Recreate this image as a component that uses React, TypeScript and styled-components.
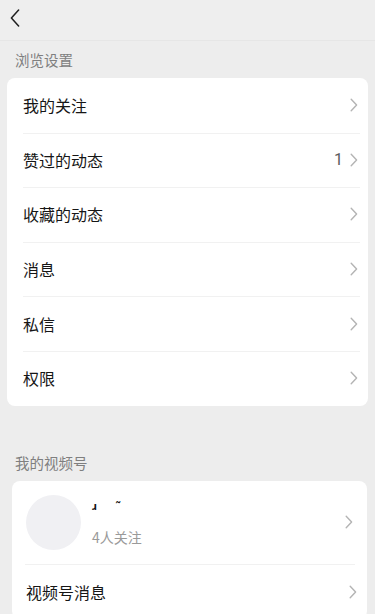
import React from "react"
import styled, { createGlobalStyle } from "styled-components"

const GlobalStyle = createGlobalStyle`
  html, body {
    margin: 0;
    padding: 0;
    background: #ededed;
    font-family: "Noto Sans CJK SC", "Noto Sans", sans-serif;
  }
`

const Page = styled.div`
  width: 375px;
  min-height: 614px;
  background: #ededed;
  overflow: hidden;
`

const TopBar = styled.header`
  height: 40px;
  display: flex;
  align-items: center;
  padding-left: 8px;
  border-bottom: 1px solid #e6e6e6;
  background: #eeeeee;
`

const BackButton = styled.button`
  width: 14px;
  height: 22px;
  padding: 0;
  border: 0;
  background: none;
  display: flex;
  align-items: center;
  justify-content: center;
  margin-top: -4px;
`

const SectionLabel = styled.div<{ $top: number }>`
  padding: ${(p) => p.$top}px 0 0 15px;
  height: 20px;
  line-height: 20px;
  font-size: 14.5px;
  color: #7f7f7f;
  margin-bottom: 8px;
`

const Card = styled.section<{ $left: number; $right: number }>`
  margin: 0 ${(p) => p.$right}px 0 ${(p) => p.$left}px;
  background: #ffffff;
  border-radius: 8px;
  overflow: hidden;
`

const Row = styled.div<{ $inset: number }>`
  height: 54.6px;
  display: flex;
  align-items: center;
  padding: 0 10px 0 ${(p) => p.$inset}px;
  position: relative;

  & + &::before {
    content: "";
    position: absolute;
    top: 0;
    left: ${(p) => p.$inset}px;
    right: 8px;
    height: 1px;
    background: #f1f1f1;
  }
`

const RowTitle = styled.span`
  flex: 1;
  font-size: 16px;
  color: #161616;
`

const RowValue = styled.span`
  font-size: 16px;
  color: #5c5c5c;
  margin-right: 7px;
  font-family: "Roboto", "Noto Sans", sans-serif;
`

const ProfileRow = styled.div`
  height: 83px;
  display: flex;
  align-items: center;
  padding: 0 14px 0 14px;
`

const Avatar = styled.div`
  width: 55px;
  height: 55px;
  border-radius: 50%;
  background: #f0f0f3;
  flex-shrink: 0;
`

const ProfileText = styled.div`
  flex: 1;
  margin-left: 11px;
  display: flex;
  flex-direction: column;
  gap: 15px;
`

const ProfileName = styled.span`
  font-size: 11px;
  line-height: 14px;
  font-weight: 700;
  color: #111111;
  letter-spacing: 8px;
`

const ProfileMeta = styled.span`
  font-size: 14px;
  line-height: 20px;
  color: #9a9a9a;
`

const Divider = styled.div`
  height: 1px;
  margin: 0 12px 0 13px;
  background: #f1f1f1;
`

function Chevron() {
  return (
    <svg width="8" height="14" viewBox="0 0 8 14" fill="none">
      <path d="M1.2 1.2 L6.6 7 L1.2 12.8" stroke="#b4b4b4" strokeWidth="1.4" strokeLinecap="round" strokeLinejoin="round" />
    </svg>
  )
}

const browseItems: { title: string; value?: string }[] = [
  { title: "我的关注" },
  { title: "赞过的动态", value: "1" },
  { title: "收藏的动态" },
  { title: "消息" },
  { title: "私信" },
  { title: "权限" },
]

export default function App() {
  return (
    <Page>
      <GlobalStyle />
      <TopBar>
        <BackButton aria-label="返回">
          <svg width="10" height="18" viewBox="0 0 10 18" fill="none">
            <path d="M8.6 1 L1.4 9 L8.6 17" stroke="#1f1f1f" strokeWidth="1.5" strokeLinecap="round" strokeLinejoin="round" />
          </svg>
        </BackButton>
      </TopBar>

      <SectionLabel $top={9}>浏览设置</SectionLabel>
      <Card $left={7} $right={7}>
        {browseItems.map((item) => (
          <Row key={item.title} $inset={16}>
            <RowTitle>{item.title}</RowTitle>
            {item.value && <RowValue>{item.value}</RowValue>}
            <Chevron />
          </Row>
        ))}
      </Card>

      <SectionLabel $top={47}>我的视频号</SectionLabel>
      <Card $left={12} $right={8}>
        <ProfileRow>
          <Avatar />
          <ProfileText>
            <ProfileName>ɹ ˜</ProfileName>
            <ProfileMeta>4人关注</ProfileMeta>
          </ProfileText>
          <Chevron />
        </ProfileRow>
        <Divider />
        <Row $inset={14}>
          <RowTitle>视频号消息</RowTitle>
          <Chevron />
        </Row>
      </Card>
    </Page>
  )
}
